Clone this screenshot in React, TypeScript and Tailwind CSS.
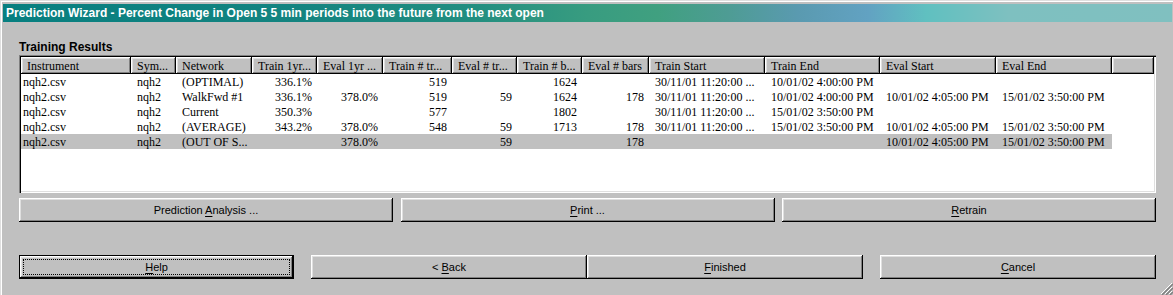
import React from "react"

type Col = { label: string; w: number; align: "left" | "right" }

const columns: Col[] = [
  { label: "Instrument", w: 110, align: "left" },
  { label: "Sym...", w: 45, align: "left" },
  { label: "Network", w: 76, align: "left" },
  { label: "Train 1yr...", w: 65, align: "right" },
  { label: "Eval 1yr ...", w: 66, align: "right" },
  { label: "Train # tr...", w: 69, align: "right" },
  { label: "Eval # tr...", w: 65, align: "right" },
  { label: "Train # b...", w: 65, align: "right" },
  { label: "Eval # bars", w: 67, align: "right" },
  { label: "Train Start", w: 116, align: "left" },
  { label: "Train End", w: 115, align: "left" },
  { label: "Eval Start", w: 116, align: "left" },
  { label: "Eval End", w: 116, align: "left" },
]

const rows: string[][] = [
  ["nqh2.csv", "nqh2", "(OPTIMAL)", "336.1%", "", "519", "", "1624", "", "30/11/01 11:20:00 ...", "10/01/02 4:00:00 PM", "", ""],
  ["nqh2.csv", "nqh2", "WalkFwd #1", "336.1%", "378.0%", "519", "59", "1624", "178", "30/11/01 11:20:00 ...", "10/01/02 4:00:00 PM", "10/01/02 4:05:00 PM", "15/01/02 3:50:00 PM"],
  ["nqh2.csv", "nqh2", "Current", "350.3%", "", "577", "", "1802", "", "30/11/01 11:20:00 ...", "15/01/02 3:50:00 PM", "", ""],
  ["nqh2.csv", "nqh2", "(AVERAGE)", "343.2%", "378.0%", "548", "59", "1713", "178", "30/11/01 11:20:00 ...", "15/01/02 3:50:00 PM", "10/01/02 4:05:00 PM", "15/01/02 3:50:00 PM"],
  ["nqh2.csv", "nqh2", "(OUT OF S...", "", "378.0%", "", "59", "", "178", "", "", "10/01/02 4:05:00 PM", "15/01/02 3:50:00 PM"],
]

const raised =
  "shadow-[inset_-1px_-1px_#000,inset_1px_1px_#fff,inset_-2px_-2px_#808080,inset_2px_2px_#dfdfdf]"

function Label({ text, u }: { text: string; u: number }) {
  return (
    <span>
      {text.slice(0, u)}
      <span className="underline underline-offset-2">{text[u]}</span>
      {text.slice(u + 1)}
    </span>
  )
}

function WinButton({ w, text, u, isDefault }: { w: number; text: string; u: number; isDefault?: boolean }) {
  if (isDefault) {
    return (
      <div className="h-[24px] border border-black bg-[#c0c0c0]" style={{ width: w }}>
        <div className={`h-full w-full p-[3px] ${raised}`}>
          <div className="flex h-full w-full items-center justify-center border border-dotted border-black text-[11px] text-black">
            <Label text={text} u={u} />
          </div>
        </div>
      </div>
    )
  }
  return (
    <div
      className={`flex h-[24px] items-center justify-center bg-[#c0c0c0] text-[11px] text-black ${raised}`}
      style={{ width: w }}
    >
      <Label text={text} u={u} />
    </div>
  )
}

export default function App() {
  return (
    <div
      className="relative flex h-[295px] w-[1173px] flex-col overflow-hidden bg-[#c0c0c0] shadow-[inset_1px_1px_#dfdfdf,inset_2px_2px_#fff]"
      style={{ fontFamily: "'Liberation Sans', Arial, sans-serif" }}
    >
      {/* title bar */}
      <div className="ml-[3px] mr-[1px] mt-[4px] flex h-[18px] items-center bg-[linear-gradient(90deg,#077f80_0%,#148480_25%,#228e80_40%,#389c80_50%,#40a080_56%,#4e9c94_62%,#5a9ab0_68%,#62a2c2_74%,#60c0c0_79%,#7ec0c0_86%,#80c0c0_100%)] pl-[3px] text-[12px] font-bold text-white">
        Prediction Wizard - Percent Change in Open 5 5 min periods into the future from the next open
      </div>

      <div className="flex flex-col pl-[19px]">
        <div className="mt-[17px] h-[16px] text-[12px] font-bold leading-[16px] text-black">Training Results</div>

        {/* list view */}
        <div className="h-[138px] w-[1137px] bg-white p-[2px] shadow-[inset_1px_1px_#808080,inset_2px_2px_#000,inset_-1px_-1px_#fff,inset_-2px_-2px_#dfdfdf]">
          <div
            className="flex flex-col text-[12px] text-black"
            style={{ fontFamily: "'Liberation Serif', 'Times New Roman', serif" }}
          >
            <div className="flex h-[17px]">
              {columns.map((c) => (
                <div
                  key={c.label}
                  className={`flex h-full shrink-0 items-center overflow-hidden whitespace-nowrap bg-[#c0c0c0] pl-[6px] ${raised}`}
                  style={{ width: c.w }}
                >
                  {c.label}
                </div>
              ))}
              <div className={`h-full flex-1 bg-[#c0c0c0] ${raised}`} />
            </div>
            {rows.map((r, i) => (
              <div key={i} className={`flex h-[15px] w-fit items-center ${i === 4 ? "bg-[#c0c0c0]" : ""}`}>
                {r.map((cell, j) => {
                  const c = columns[j]
                  return (
                    <div
                      key={j}
                      className={`shrink-0 overflow-hidden whitespace-nowrap ${
                        c.align === "right" ? "pr-[5px] text-right" : j === 0 ? "pl-[2px]" : "pl-[6px]"
                      }`}
                      style={{ width: c.w }}
                    >
                      {cell}
                    </div>
                  )
                })}
              </div>
            ))}
          </div>
        </div>

        {/* action buttons */}
        <div className="mt-[5px] flex w-[1137px] justify-between">
          <WinButton w={374} text="Prediction Analysis ..." u={11} />
          <WinButton w={374} text="Print ..." u={0} />
          <WinButton w={374} text="Retrain" u={0} />
        </div>

        {/* wizard buttons */}
        <div className="mt-[33px] flex w-[1137px]">
          <WinButton w={275} text="Help" u={0} isDefault />
          <div className="ml-[17px]">
            <WinButton w={276} text="< Back" u={2} />
          </div>
          <WinButton w={276} text="Finished" u={0} />
          <div className="ml-[17px]">
            <WinButton w={276} text="Cancel" u={0} />
          </div>
        </div>
      </div>

      {/* resize grip */}
      <svg className="absolute bottom-0 right-0" width="13" height="13" viewBox="0 0 13 13">
        <path d="M12 1 L1 12 M12 5 L5 12 M12 9 L9 12" stroke="#fff" strokeWidth="1" />
        <path d="M13 2 L2 13 M13 6 L6 13 M13 10 L10 13" stroke="#808080" strokeWidth="1.5" />
      </svg>
    </div>
  )
}
